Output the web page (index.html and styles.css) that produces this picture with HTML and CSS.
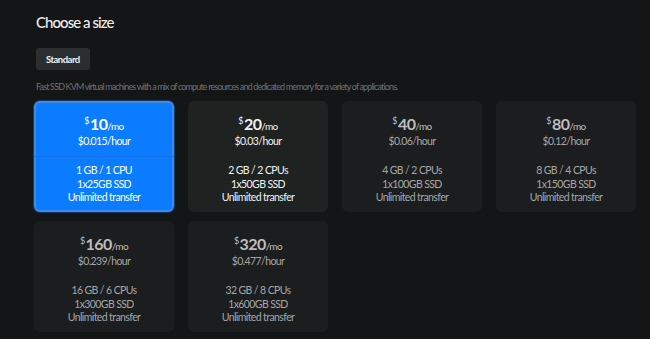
FILE: index.html
```html
<!DOCTYPE html>
<html lang="en">

<head>
    <meta charset="UTF-8">
    <meta name="viewport" content="width=device-width, initial-scale=1.0">
    <title>Choose a size</title>
    <link rel="stylesheet" href="styles.css">
</head>

<body>
    <div class="container">
        <h1>Choose a size</h1>

        <div class="tabs">
            <button class="tab">Standard</button>
        </div>

        <p class="description">Fast SSD KVM virtual machines with a mix of compute resources and dedicated memory for a variety of applications.</p>

        <div class="sizes">
            <div class="size selected">
                <div class="size-price">
                    <div class="monthly"><sup>$</sup><strong>10</strong>/mo</div>
                    <div class="hourly">$0.015/hour</div>
                </div>
                <div class="size-specs">
                    <div>1 GB / 1 CPU</div>
                    <div>1x25GB SSD</div>
                    <div>Unlimited transfer</div>
                </div>
            </div>

            <div class="size available">
                <div class="size-price">
                    <div class="monthly"><sup>$</sup><strong>20</strong>/mo</div>
                    <div class="hourly">$0.03/hour</div>
                </div>
                <div class="size-specs">
                    <div>2 GB / 2 CPUs</div>
                    <div>1x50GB SSD</div>
                    <div>Unlimited transfer</div>
                </div>
            </div>

            <div class="size">
                <div class="size-price">
                    <div class="monthly"><sup>$</sup><strong>40</strong>/mo</div>
                    <div class="hourly">$0.06/hour</div>
                </div>
                <div class="size-specs">
                    <div>4 GB / 2 CPUs</div>
                    <div>1x100GB SSD</div>
                    <div>Unlimited transfer</div>
                </div>
            </div>

            <div class="size">
                <div class="size-price">
                    <div class="monthly"><sup>$</sup><strong>80</strong>/mo</div>
                    <div class="hourly">$0.12/hour</div>
                </div>
                <div class="size-specs">
                    <div>8 GB / 4 CPUs</div>
                    <div>1x150GB SSD</div>
                    <div>Unlimited transfer</div>
                </div>
            </div>

            <div class="size">
                <div class="size-price">
                    <div class="monthly"><sup>$</sup><strong>160</strong>/mo</div>
                    <div class="hourly">$0.239/hour</div>
                </div>
                <div class="size-specs">
                    <div>16 GB / 6 CPUs</div>
                    <div>1x300GB SSD</div>
                    <div>Unlimited transfer</div>
                </div>
            </div>

            <div class="size">
                <div class="size-price">
                    <div class="monthly"><sup>$</sup><strong>320</strong>/mo</div>
                    <div class="hourly">$0.477/hour</div>
                </div>
                <div class="size-specs">
                    <div>32 GB / 8 CPUs</div>
                    <div>1x600GB SSD</div>
                    <div>Unlimited transfer</div>
                </div>
            </div>
        </div>
    </div>
</body>

</html>
```

FILE: styles.css
```css
body {
    font-family: Lato, 'Open Sans', sans-serif;
    margin: 0;
    padding: 0;
    background-color: #141516;
    color: #e6e6e6;
}

.container {
    padding: 12px 34px 0 34px;
}

h1 {
    margin: 0 0 0 2px;
    font-size: 15px;
    font-weight: 500;
    letter-spacing: -0.95px;
    line-height: 20px;
    color: #ececec;
}

.tabs {
    display: flex;
    margin: 16px 0 0 2px;
}

.tab {
    font-family: inherit;
    height: 22px;
    padding: 0 10px;
    background-color: #2a2e2e;
    color: #f0f0f0;
    border: none;
    border-radius: 3px;
    font-size: 9.5px;
    font-weight: 700;
    letter-spacing: -0.5px;
    cursor: pointer;
}

.description {
    margin: 10px 0 0 2px;
    font-size: 9px;
    letter-spacing: -0.85px;
    line-height: 14px;
    color: #6b7276;
}

.sizes {
    display: grid;
    grid-template-columns: repeat(4, 140px);
    column-gap: 14px;
    row-gap: 9px;
    margin-top: 7px;
}

.size {
    height: 111px;
    box-sizing: border-box;
    padding-top: 13px;
    background-color: #1c1d1e;
    border-radius: 6px;
    text-align: center;
    font-size: 10.5px;
    letter-spacing: -0.6px;
    color: #a4a6a7;
}

.size.available {
    background-color: #1e2221;
    color: #f2f2f2;
}

.size.selected {
    background-color: #0b7bff;
    border: 2px solid #3f8be4;
    padding-top: 11px;
    color: #ffffff;
    box-shadow: 0 0 0 1px #1a3a66;
}

.size-price {
    padding-bottom: 8px;
    border-bottom: 1px solid transparent;
}

.size.selected .size-price {
    border-bottom-color: #1670e6;
    margin: 0 -2px;
}

.monthly {
    height: 20px;
    line-height: 20px;
    font-size: 10px;
}

.monthly sup {
    position: relative;
    top: -6px;
    font-size: 9px;
    line-height: 0;
    vertical-align: baseline;
    margin-right: 1px;
}

.monthly strong {
    font-size: 16px;
    font-weight: 700;
}

.size:not(.selected):not(.available) .monthly {
    color: #bcbdbe;
}

.hourly {
    line-height: 14px;
}

.size-specs {
    padding-top: 7px;
    line-height: 13.5px;
}
```
